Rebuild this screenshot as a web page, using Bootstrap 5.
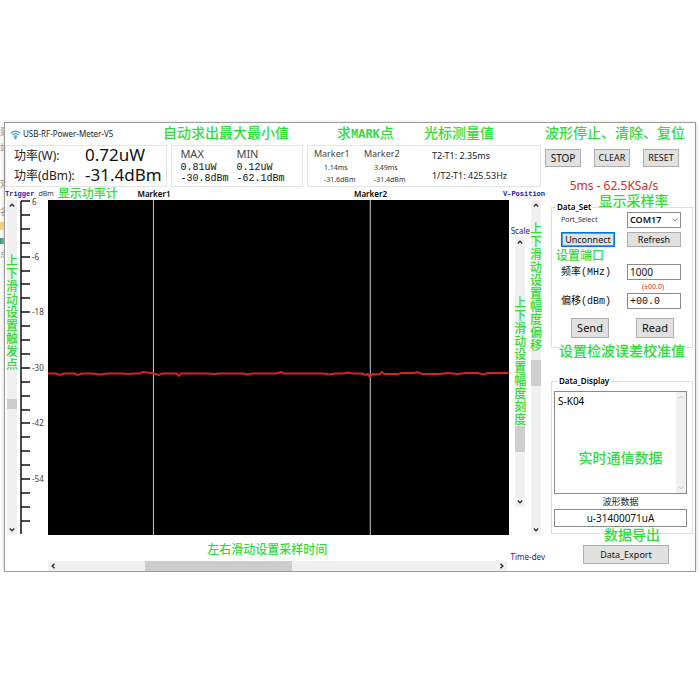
<!DOCTYPE html>
<html lang="zh-CN">
<head>
<meta charset="utf-8">
<meta name="viewport" content="width=device-width, initial-scale=1">
<title>USB-RF-Power-Meter-V5</title>
<link rel="stylesheet" href="https://cdn.jsdelivr.net/npm/bootstrap@5.3.0/dist/css/bootstrap.min.css">
<style>
  body { font-family: "Noto Sans", "Noto Sans CJK SC", sans-serif; font-size: 9px; line-height: 12px; color: #222; background: #fff; padding: 122px 4px 0 0; }
  .behind { width: 4px; white-space: nowrap; color: #777; font-size: 9px; }
  .behind .tint-a { height: 8px; background: #f3d078; }
  .behind .tint-b { height: 6px; background: #3d9a80; }
  .app-win { border: 1px solid #9a9a9a; box-shadow: 0 1px 4px #ccc; background: #fff; }
  .side { width: 150px; }
  .note { color: #2fdc3c; font-family: "Liberation Serif", "Noto Sans CJK SC", serif; white-space: nowrap; font-weight: 500; }
  .n12 { font-size: 12px; line-height: 14px; }
  .n14 { font-size: 14px; line-height: 18px; }
  .latin { font-family: "Liberation Mono", monospace; font-size: 12px; font-weight: bold; }
  .bar { height: 22px; }
  .bar-title { width: 158px; font-size: 8px; padding-left: 5px; gap: 2px; }
  .bar-b { width: 174px; }
  .bar-c { width: 87px; }
  .pane { border: 1px solid #e4e4e4; height: 42px; }
  .p1 { flex: 153 1 0; } .p2 { flex: 122 1 0; } .p3 { flex: 227 1 0; padding-left: 6px; }
  .cap { font-size: 12px; line-height: 20px; width: 71px; }
  .val { font-size: 17px; line-height: 18px; color: #111; }
  .mm { font-size: 11px; line-height: 16px; color: #444; }
  .mono { font-family: "Liberation Mono", "Noto Sans CJK SC", monospace; font-size: 10px; line-height: 11px; color: #111; }
  .mkcol { width: 50px; }
  .mk { font-size: 9px; line-height: 16px; color: #444; }
  .tiny { font-size: 7px; line-height: 12px; color: #333; }
  .indent { padding-left: 10px; }
  .diff { padding-left: 18px; }
  .blue { color: #2020a8; font-size: 8px; line-height: 12px; white-space: nowrap; }
  .blue-m { font-family: "Liberation Mono", monospace; font-size: 7px; color: #2020a8; white-space: nowrap; font-weight: bold; }
  .heads { height: 13px; }
  .graph { min-height: 335px; padding-left: 2px; }
  .plot { background: #000; flex: 1 1 0; }
  .plot svg { width: 100%; height: 100%; display: block; }
  .flag { position: absolute; bottom: 100%; transform: translateX(-50%); font-size: 8px; line-height: 12px; color: #000; font-weight: 600; }
  .f1 { left: 23%; } .f2 { left: 70%; }
  .axis { width: 28px; height: 335px; margin-left: 3px; overflow: visible; }
  .axis text { font-size: 8px; fill: #444; }
  .scale-col { padding-top: 25px; padding-bottom: 28px; margin-left: 2px; margin-right: 1px; }
  .vs { width: 10px; background: #f0f0f0; }
  .hs { height: 10px; background: #f0f0f0; }
  .arrow { border: 0; padding: 0; background: transparent; width: 10px; height: 10px; line-height: 0; flex: none; }
  .arrow svg { width: 6px; height: 6px; fill: none; stroke: #333; stroke-width: 2; }
  .pale svg { stroke: #aaa; stroke-width: 1; }
  .rng { appearance: none; -webkit-appearance: none; background: transparent; margin: 0; min-width: 0; min-height: 0; flex: 1 1 0; }
  .vs .rng { writing-mode: vertical-lr; width: 10px; }
  .hs .rng { height: 10px; }
  .rng::-webkit-slider-thumb { -webkit-appearance: none; background: #cdcdcd; width: 10px; height: 10px; border-radius: 0; }
  .vs .tall::-webkit-slider-thumb { height: 26px; }
  .hs .rng::-webkit-slider-thumb { width: 147px; }
  .foot-main { padding-left: 43px; }
  .foot-note { padding-right: 20px; }
  .vnote { position: absolute; left: 50%; transform: translateX(-50%); width: 12px; font-size: 12px; line-height: 13px; white-space: normal; text-align: center; word-break: break-all; pointer-events: none; }
  .v-trig { top: 55px; }
  .v-scale { top: 60px; }
  .v-pos { top: 23px; }
  .gbtn { background: #e1e1e1; border: 1px solid #adadad; color: #111; border-radius: 0; padding: 0; text-align: center; line-height: 14px; font-size: 9px; }
  .gbtn.on { border: 1px solid #0078d7; outline: 1px solid #4c9fe0; outline-offset: -2px; }
  .top3 { width: 36px; height: 18px; }
  .wide-t { font-size: 10px; }
  .mid { width: 54px; height: 15px; line-height: 12px; }
  .big { width: 38px; height: 20px; font-size: 11px; }
  .export { width: 86px; height: 19px; }
  .rate { color: #d22a2a; font-size: 12px; line-height: 16px; padding: 7px 12px 8px 0; }
  .grp { border: 1px solid #dedede; margin: 0 2px 0 6px; }
  .grp > .cap-t { float: none; width: auto; font-size: 8px; line-height: 10px; margin: 0 0 0 4px; padding: 0 1px; font-weight: 600; color: #000; }
  .line { display: flex; justify-content: space-between; align-items: center; padding: 0 11px 0 9px; }
  .fld { border: 1px solid #8a8a8a; background: #fff; border-radius: 0; padding: 0 2px; font-size: 10px; line-height: 12px; color: #111; width: 54px; height: 16px; display: block; }
  select.fld { appearance: none; -webkit-appearance: none; font-size: 9px; font-weight: 600; }
  .pick svg { position: absolute; right: 3px; top: 5px; width: 6px; height: 6px; fill: none; stroke: #555; }
  .port-note { padding: 2px 0 1px 4px; }
  .limit { padding: 1px 28px 0 0; line-height: 12px; color: #d22a2a; }
  .actions { padding: 9px 18px 9px 19px; }
  .grp2 { margin-top: 28px; padding: 0 5px 6px 2px; }
  .log { resize: none; border: 0; padding: 2px 3px; font-size: 10px; line-height: 14px; height: 101px; flex: 1 1 0; min-width: 0; overflow: hidden; }
  .logbox { border: 1px solid #8a8a8a; margin-top: 5px; }
  .wave { font-size: 9px; line-height: 15px; text-align: center; display: block; }
  .wave-in { height: 18px; }
  .export-row { padding: 11px 0 0 12px; }
  .over { position: absolute; z-index: 2; left: 0; right: 0; text-align: center; pointer-events: none; font-size: 14px; line-height: 18px; }
  .o-rate { bottom: -9px; padding-left: 27px; }
  .o-log { top: 58px; }
  .o-exp { bottom: -12px; padding-left: 20px; }
  .o-cal { bottom: -14px; }
</style>
<script src="https://cdn.jsdelivr.net/npm/bootstrap@5.3.0/dist/js/bootstrap.bundle.min.js"></script>
</head>
<body>
<div class="d-flex">
  <div class="behind overflow-hidden pt-1" aria-hidden="true">
    <div>到</div><div class="pt-1">站</div><div class="pt-4">双</div><div class="pt-3">名</div>
    <div class="tint-a mt-1"></div><div class="tint-b mt-2"></div><div class="pt-1">点</div>
  </div>
  <main class="app-win d-flex flex-grow-1">
    <section class="flex-grow-1 d-flex flex-column">
      <header class="bar d-flex align-items-center">
        <div class="bar-title d-flex align-items-center text-nowrap">
          <svg width="11" height="9" viewBox="0 0 11 9" fill="none" stroke="#3e9ac8" stroke-width="1.1" aria-hidden="true"><path d="M.7 3.3Q5.5-1.2 10.3 3.3M2.4 5Q5.5 2.1 8.6 5M3.9 6.7Q5.5 5.2 7.1 6.7"/><circle cx="5.5" cy="8" r=".6"/></svg>
          <span>USB-RF-Power-Meter-V5</span>
        </div>
        <div class="note n14 bar-b">自动求出最大最小值</div>
        <div class="note n14 bar-c">求<span class="latin">MARK</span>点</div>
        <div class="note n14">光标测量值</div>
      </header>
      <div class="d-flex gap-1 pe-1">
        <div class="pane p1 ps-2">
          <div class="d-flex text-nowrap"><span class="cap">功率(W):</span><span class="val">0.72uW</span></div>
          <div class="d-flex text-nowrap"><span class="cap">功率(dBm):</span><span class="val">-31.4dBm</span></div>
        </div>
        <div class="pane p2 d-flex gap-2 ps-2">
          <div><div class="mm">MAX</div><div class="mono">0.81uW</div><div class="mono">-30.8dBm</div></div>
          <div><div class="mm">MIN</div><div class="mono">0.12uW</div><div class="mono">-62.1dBm</div></div>
        </div>
        <div class="pane p3 d-flex text-nowrap">
          <div class="mkcol"><div class="mk">Marker1</div><div class="tiny indent">1.14ms</div><div class="tiny indent">-31.6dBm</div></div>
          <div class="mkcol"><div class="mk">Marker2</div><div class="tiny indent">3.49ms</div><div class="tiny indent">-31.4dBm</div></div>
          <div class="diff d-flex flex-column justify-content-between py-1"><span>T2-T1: 2.35ms</span><span>1/T2-T1: 425.53Hz</span></div>
        </div>
      </div>
      <div class="heads d-flex align-items-center">
        <span class="blue-m">Trigger</span><span class="tiny ps-1">dBm</span><span class="note n12 ps-1">显示功率计</span>
        <span class="blue-m ms-auto">V-Position</span>
      </div>
      <div class="graph d-flex">
        <div class="vs d-flex flex-column position-relative">
          <button class="arrow" aria-label="Trigger up"><svg viewBox="0 0 8 8"><path d="M1 6 4 3 7 6"/></svg></button>
          <input class="rng" type="range" min="0" max="100" value="62" aria-label="Trigger">
          <button class="arrow" aria-label="Trigger down"><svg viewBox="0 0 8 8"><path d="M1 2 4 5 7 2"/></svg></button>
          <div class="note vnote v-trig">上下滑动设置触发点</div>
        </div>
        <svg class="axis" viewBox="0 0 28 335" role="img" aria-label="dBm axis">
          <path id="ticks" stroke="#111" stroke-width="1.5" fill="none"/>
          <g><text x="12" y="5">6</text><text x="12" y="60">-6</text><text x="12" y="115">-18</text><text x="12" y="171">-30</text><text x="12" y="226">-42</text><text x="12" y="282">-54</text></g>
        </svg>
        <div class="plot position-relative">
          <span class="flag f1">Marker1</span><span class="flag f2">Marker2</span>
          <svg viewBox="0 0 461 335" preserveAspectRatio="none" role="img" aria-label="Power trace">
            <path d="M105.500 0V335M322.500 0V335" stroke="#c8c8c8" stroke-width="1"/>
            <path d="M0 173.500H8L12 175 16 173.500H26L30 175 34 173.500H44L52 174.500 60 173.500H74L80 174 86 173.500H92L95 172 99 172.500 104 173 111 175 114 173.500H129L131 176 133 173.500H160L166 174 172 173.500H196L200 174.500 204 173.500H228L233 172 236 173.500H276L282 174.500 287 173.500H296L300 172.500 304 173.500H314L318 175 320 174 322 177 325 174 332 174.500 334 172 337 174H350L354 173H366L370 172 374 174H392L400 173 410 174 418 173H430L436 174.500 440 173H461" fill="none" stroke="#e01f1f" stroke-width="2"/>
          </svg>
        </div>
        <div class="scale-col d-flex flex-column align-items-center">
          <span class="blue">Scale</span>
          <div class="vs d-flex flex-column flex-grow-1 position-relative">
            <button class="arrow" aria-label="Scale up"><svg viewBox="0 0 8 8"><path d="M1 6 4 3 7 6"/></svg></button>
            <input class="rng tall" type="range" min="0" max="100" value="80" aria-label="Scale">
            <button class="arrow" aria-label="Scale down"><svg viewBox="0 0 8 8"><path d="M1 2 4 5 7 2"/></svg></button>
            <div class="note vnote v-scale">上下滑动设置幅度刻度</div>
          </div>
        </div>
        <div class="vs d-flex flex-column position-relative me-1">
          <button class="arrow" aria-label="Position up"><svg viewBox="0 0 8 8"><path d="M1 6 4 3 7 6"/></svg></button>
          <input class="rng tall" type="range" min="0" max="100" value="52" aria-label="V-Position">
          <button class="arrow" aria-label="Position down"><svg viewBox="0 0 8 8"><path d="M1 2 4 5 7 2"/></svg></button>
          <div class="note vnote v-pos">上下滑动设置幅度偏移</div>
        </div>
      </div>
      <footer class="d-flex">
        <div class="foot-main flex-grow-1">
          <div class="note n12 foot-note text-center pt-2 pb-1">左右滑动设置采样时间</div>
          <div class="hs d-flex">
            <button class="arrow" aria-label="Time left"><svg viewBox="0 0 8 8"><path d="M6 1 3 4 6 7"/></svg></button>
            <input class="rng" type="range" min="0" max="100" value="30" aria-label="Time-dev">
            <button class="arrow" aria-label="Time right"><svg viewBox="0 0 8 8"><path d="M2 1 5 4 2 7"/></svg></button>
          </div>
        </div>
        <span class="blue pt-3 ps-1">Time-dev</span>
      </footer>
    </section>

    <aside class="side flex-shrink-0">
      <div class="bar d-flex align-items-center note n14">波形停止、清除、复位</div>
      <div class="d-flex justify-content-between pt-1 pe-3">
        <button class="gbtn top3 wide-t">STOP</button><button class="gbtn top3">CLEAR</button><button class="gbtn top3">RESET</button>
      </div>
      <div class="rate position-relative text-center mt-1">5ms - 62.5KSa/s<div class="note over o-rate">显示采样率</div></div>
      <fieldset class="grp position-relative">
        <legend class="cap-t">Data_Set</legend>
        <div class="line">
          <label class="tiny" for="port">Port_Select</label>
          <span class="pick position-relative"><select id="port" class="fld"><option>COM17</option></select><svg viewBox="0 0 8 8"><path d="M1 2 4 5 7 2"/></svg></span>
        </div>
        <div class="line pt-1"><button class="gbtn mid on">Unconnect</button><button class="gbtn mid">Refresh</button></div>
        <div class="note n12 port-note">设置端口</div>
        <div class="line"><label class="mono" for="freq">频率(MHz)</label><input id="freq" class="fld" value="1000"></div>
        <div class="tiny text-end limit">(±00.0)</div>
        <div class="line"><label class="mono" for="offs">偏移(dBm)</label><input id="offs" class="fld mono" value="+00.0"></div>
        <div class="actions d-flex justify-content-between"><button class="gbtn big">Send</button><button class="gbtn big">Read</button></div>
        <div class="note over o-cal">设置检波误差校准值</div>
      </fieldset>
      <fieldset class="grp grp2 position-relative">
        <legend class="cap-t">Data_Display</legend>
        <div class="logbox d-flex position-relative">
          <textarea class="log" aria-label="Data_Display">S-K04</textarea>
          <div class="vs d-flex flex-column justify-content-between">
            <button class="arrow pale" aria-label="Log up"><svg viewBox="0 0 8 8"><path d="M1 6 4 3 7 6"/></svg></button>
            <button class="arrow pale" aria-label="Log down"><svg viewBox="0 0 8 8"><path d="M1 2 4 5 7 2"/></svg></button>
          </div>
          <div class="note over o-log">实时通信数据</div>
        </div>
        <label class="wave" for="wave">波形数据</label>
        <input id="wave" class="fld wave-in w-100 text-center" value="u-31400071uA">
        <div class="note over o-exp">数据导出</div>
      </fieldset>
      <div class="text-center export-row"><button class="gbtn export">Data_Export</button></div>
    </aside>
  </main>
</div>
<script>
  // Axis line with a tick every 3 dB
  let d = "M1 1V334";
  for (let i = 0; i < 24; i++) d += "M1 " + Math.round(1 + i * 13.9) + "H10";
  document.getElementById("ticks").setAttribute("d", d);
</script>
</body>
</html>
